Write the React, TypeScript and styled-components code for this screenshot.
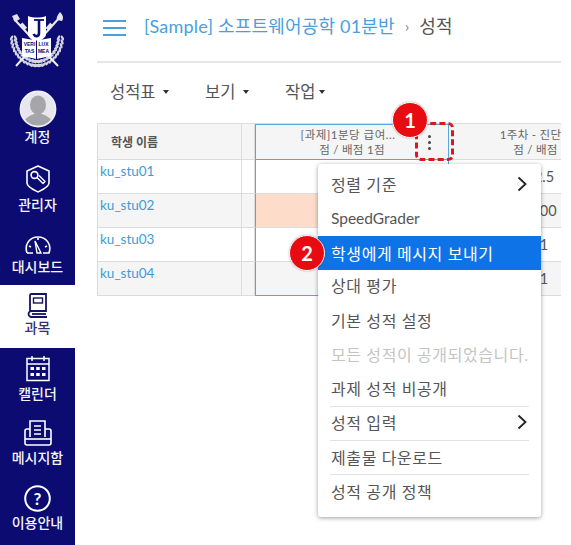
import React from 'react';
import styled, { createGlobalStyle } from 'styled-components';

const Global = createGlobalStyle`
    html, body {
        margin: 0;
        padding: 0;
        background: #fff;
        overflow: hidden;
    }
    * { box-sizing: border-box; }
    body {
        font-family: Lato, "Noto Sans CJK KR", "Noto Sans", sans-serif;
        color: #444;
    }
`;

const Page = styled.div`
    position: relative;
    display: flex;
    width: 571px;
    height: 545px;
    overflow: hidden;
`;

const Sidebar = styled.nav`
    width: 75px;
    flex: none;
    background: #0b0b72;
    display: flex;
    flex-direction: column;
`;

const LogoBox = styled.div`
    height: 87px;
    padding: 12px 0 0 10px;
`;

const NavItem = styled.div<{ $h: number; $pad: number; $active?: boolean }>`
    height: ${(p) => p.$h}px;
    padding-top: ${(p) => p.$pad}px;
    display: flex;
    flex-direction: column;
    align-items: center;
    background: ${(p) => (p.$active ? '#fff' : 'transparent')};
    color: ${(p) => (p.$active ? '#33336e' : '#f4f4fb')};
    font-size: 14px;
    line-height: 18px;
    font-weight: 500;
`;

const IconSlot = styled.div<{ $mb: number }>`
    display: flex;
    margin-bottom: ${(p) => p.$mb}px;
`;

const Main = styled.main`
    flex: 1;
    min-width: 0;
    padding-left: 22px;
`;

const Header = styled.header`
    width: 464px;
    height: 63px;
    border-bottom: 2px solid #e6e6e6;
    display: flex;
    align-items: flex-start;
    padding: 20px 0 0 6px;
`;

const Burger = styled.div`
    position: relative;
    width: 23px;
    height: 16px;
    margin-right: 18px;
    border-top: 2px solid #4a9fdc;
    border-bottom: 2px solid #4a9fdc;
    &::after {
        content: '';
        position: absolute;
        left: 0;
        right: 0;
        top: 5px;
        height: 2px;
        background: #4a9fdc;
    }
`;

const Crumbs = styled.div`
    display: flex;
    align-items: center;
    font-size: 18px;
    line-height: 12px;
    white-space: nowrap;
`;

const CourseLink = styled.span`
    color: #4a9fdc;
    letter-spacing: 0.2px;
`;

const CrumbSep = styled.span`
    color: #8a8a8a;
    margin: 0 10px 0 10px;
    font-size: 16px;
`;

const CrumbNow = styled.span`
    color: #555;
`;

const Toolbar = styled.div`
    display: flex;
    align-items: center;
    height: 60px;
    padding: 0 0 4px 13px;
    font-size: 16.5px;
    color: #555;
`;

const ToolItem = styled.div<{ $w: number; $gap: number }>`
    width: ${(p) => p.$w}px;
    display: flex;
    align-items: center;
    gap: ${(p) => p.$gap}px;
    &::after {
        content: '';
        border-left: 3px solid transparent;
        border-right: 3px solid transparent;
        border-top: 4px solid #333;
        margin-top: 2px;
    }
`;

const Grid = styled.div`
    display: grid;
    grid-template-columns: 145px 13px 194px 194px;
    grid-template-rows: 36px repeat(4, 34px);
    width: 464px;
    border-top: 1px solid #ddd;
    overflow: hidden;
`;

const Cell = styled.div<{ $shade?: boolean; $bg?: string }>`
    background: ${(p) => p.$bg ?? (p.$shade ? '#f5f5f5' : '#fff')};
    border-bottom: 1.5px solid #dcdcdc;
    border-right: 1.5px solid #dcdcdc;
    overflow: hidden;
`;

const NameCell = styled(Cell)`
    border-left: 1.5px solid #dcdcdc;
    padding: 3px 0 0 2px;
    color: #3d9bd9;
    font-size: 13.5px;
    line-height: 16px;
`;

const NameHead = styled(Cell)`
    border-left: 1.5px solid #dcdcdc;
    display: flex;
    align-items: center;
    padding-left: 13px;
    background: #f5f5f5;
    font-size: 12px;
    font-weight: 700;
    color: #555;
`;

const BlueCell = styled(Cell)<{ $top?: boolean; $last?: boolean }>`
    border-left: 1.5px solid #5aa5dc;
    border-right: 1.5px solid #5aa5dc;
    border-top: ${(p) => (p.$top ? '1.5px solid #5aa5dc' : 'none')};
    border-bottom: ${(p) => (p.$top || p.$last ? '1.5px solid #5aa5dc' : '1.5px solid #dcdcdc')};
`;

const ColHead = styled.div`
    height: 100%;
    display: flex;
    flex-direction: column;
    align-items: center;
    justify-content: center;
    font-size: 11.5px;
    line-height: 15px;
    letter-spacing: 0.3px;
    color: #666;
    white-space: nowrap;
`;

// the first column's title sits a little left of its score line
const TrimmedTitle = styled.span`
    margin-right: 8px;
    letter-spacing: 0.5px;
`;

const ColHeadNext = styled(Cell)`
    background: #f5f5f5;
    border-right: none;
`;

const ScoreCell = styled(Cell)`
    border-right: none;
    padding: 9px 4px 0 0;
    text-align: center;
    font-size: 14.5px;
    line-height: 16px;
    color: #555;
`;

const DashBox = styled.div`
    position: absolute;
    left: 415px;
    top: 122px;
    width: 39px;
    height: 39px;
    border: 3px dashed #d81920;
    border-radius: 6px;
`;

const Dots = styled.div`
    position: absolute;
    left: 428px;
    top: 135px;
    display: flex;
    flex-direction: column;
    gap: 3px;
    & i {
        width: 3px;
        height: 3px;
        border-radius: 50%;
        background: #444;
    }
`;

const Badge = styled.div<{ $x: number; $y: number }>`
    position: absolute;
    left: ${(p) => p.$x}px;
    top: ${(p) => p.$y}px;
    width: 36px;
    height: 36px;
    border-radius: 50%;
    background: #e80c12;
    border: 1px solid #fff;
    box-shadow: 0 0 2px rgba(0, 0, 0, 0.3);
    color: #fff;
    font-size: 20px;
    font-weight: 700;
    display: flex;
    align-items: center;
    justify-content: center;
`;

const Menu = styled.div`
    position: absolute;
    left: 318px;
    top: 164px;
    width: 223px;
    height: 353px;
    background: #fff;
    border-radius: 3px;
    box-shadow: 0 1px 4px rgba(0, 0, 0, 0.38);
    padding-top: 3px;
    display: flex;
    flex-direction: column;
`;

const MenuItem = styled.div<{ $active?: boolean; $off?: boolean; $line?: boolean; $latin?: boolean }>`
    position: relative;
    height: 34.25px;
    flex: none;
    display: flex;
    align-items: center;
    justify-content: space-between;
    padding: 0 14px 0 13px;
    font-size: ${(p) => (p.$latin ? 15.5 : 16)}px;
    letter-spacing: ${(p) => (p.$latin ? 0 : 0.6)}px;
    white-space: nowrap;
    background: ${(p) => (p.$active ? '#0f73e8' : 'transparent')};
    color: ${(p) => (p.$active ? '#fff' : p.$off ? '#c4c4c4' : '#555')};
    &:nth-child(n + 4) {
        padding-bottom: 3px;
    }
    ${(p) =>
        p.$line &&
        `&::after {
            content: '';
            position: absolute;
            left: 12px;
            right: 12px;
            bottom: 0;
            height: 1px;
            background: #e2e2e2;
        }`}
`;

const Chevron = () => (
    <svg width="10" height="16" viewBox="0 0 10 16" fill="none" stroke="#222" strokeWidth="1.8">
        <path d="M1.5 1.5 8.5 8 1.5 14.5" />
    </svg>
);

// leaves of the wreath, laid along an arc around the crest, an outer and an inner row
const leaves = [0, 1].flatMap((row) =>
    Array.from({ length: 13 }, (_, i) => {
        const deg = 178 - i * 8;
        const a = (deg * Math.PI) / 180;
        const x = 27 + (row ? 21.5 : 25.5) * Math.cos(a);
        const y = 25 + (row ? 24.5 : 28.5) * Math.sin(a);
        return { x, y, r: deg + 90 + (row ? -28 : 28) };
    })
);

const Logo = () => (
    <svg width="54" height="56" viewBox="0 0 54 56" fill="none">
        {leaves.map((l, i) => (
            <g key={i} fill="#d6d6e2">
                <ellipse cx={l.x} cy={l.y} rx="2.8" ry="1.2" transform={`rotate(${l.r} ${l.x} ${l.y})`} />
                <ellipse cx={54 - l.x} cy={l.y} rx="2.8" ry="1.2" transform={`rotate(${180 - l.r} ${54 - l.x} ${l.y})`} />
            </g>
        ))}
        {/* mace and torch crossing behind the book */}
        <path d="M4 7 48 54" stroke="#ececf3" strokeWidth="2" />
        <path d="M50 5 6 54" stroke="#ececf3" strokeWidth="2" />
        <path d="M2 4 7 2 10 7 5 10Z" fill="#e2e2ea" />
        <path d="M50 0C53 3 54 6 52 9L47 8C46 5 48 3 50 0Z" fill="#e6e6ee" />
        <rect x="36" y="13" width="7" height="3.500" transform="rotate(-48 39 15)" fill="#e6e6ee" />
        <rect x="10" y="12" width="7" height="3.500" transform="rotate(48 13 14)" fill="#e6e6ee" />
        {/* shield with the J */}
        <path d="M18 4C23 6 31 6 36 4V22C36 26 31 28 27 30 23 28 18 26 18 22Z" fill="#fff" />
        <path d="M29 8V21C29 25 25 25 23.500 22" stroke="#0b0b72" strokeWidth="2.600" />
        <path d="M24 8H34" stroke="#0b0b72" strokeWidth="1.800" />
        {/* open book */}
        <path d="M12 26 26.500 28.500 41 26V44L26.500 47 12 44Z" fill="#fff" />
        <path d="M26.500 28.500V47" stroke="#0b0b72" strokeWidth="1" />
        <text x="19.500" y="34" textAnchor="middle" fontSize="5" fontWeight="700" fill="#0b0b72" fontFamily="Liberation Sans">VERI</text>
        <text x="33.500" y="34" textAnchor="middle" fontSize="5" fontWeight="700" fill="#0b0b72" fontFamily="Liberation Sans">LUX</text>
        <text x="19.500" y="41" textAnchor="middle" fontSize="5" fontWeight="700" fill="#0b0b72" fontFamily="Liberation Sans">TAS</text>
        <text x="33.500" y="41" textAnchor="middle" fontSize="5" fontWeight="700" fill="#0b0b72" fontFamily="Liberation Sans">MEA</text>
    </svg>
);

const AccountIcon = () => (
    <svg width="38" height="38" viewBox="0 0 38 38">
        <defs>
            <clipPath id="avatar"><circle cx="19" cy="19" r="17" /></clipPath>
        </defs>
        <circle cx="19" cy="19" r="17.500" fill="#e6e6ec" />
        <g clipPath="url(#avatar)" fill="#a6a6aa">
            <ellipse cx="19" cy="15" rx="8" ry="9.500" />
            <path d="M3 38C3 29 10 26 15 24H23C28 26 35 29 35 38Z" />
        </g>
        <circle cx="19" cy="19" r="17.500" fill="none" stroke="#eeeef8" strokeWidth="1.800" />
    </svg>
);

const AdminIcon = () => (
    <svg width="24" height="28" viewBox="0 0 24 28" fill="none" stroke="#fff" strokeWidth="1.600" strokeLinejoin="round">
        <path d="M12 1 23 6V18C23 22 16 25 12 27 8 25 1 22 1 18V6Z" />
        <circle cx="8.500" cy="10" r="3.400" />
        <path d="M11 12.500 17 18.500 19 16.500 13 10.500" strokeWidth="1.400" />
    </svg>
);

const DashIcon = () => (
    <svg width="28" height="20" viewBox="0 0 28 20" fill="none" stroke="#fff" strokeWidth="1.600">
        <path d="M3 18C0 9 6 2 14 2S28 9 25 18H19M9 18H3" />
        <path d="M11 6 17 18H13Z" strokeWidth="1.400" />
        <path d="M5 11 7 12M23 11 21 12M14 3V5" />
    </svg>
);

const BookIcon = () => (
    <svg width="21" height="25" viewBox="0 0 21 25" fill="none" stroke="#14145f" strokeWidth="1.800">
        <path d="M3 19V2.500C3 1.500 3.500 1 4.500 1H19V18H4.500C3 18 1.500 19.500 1.500 21S3 24 4.500 24H20" />
        <path d="M19 21H5" />
        <rect x="6.500" y="5" width="9" height="5" strokeWidth="1.400" />
    </svg>
);

const CalendarIcon = () => (
    <svg width="24" height="27" viewBox="0 0 24 27" fill="none" stroke="#fff" strokeWidth="1.500">
        <rect x="1" y="3.500" width="22" height="22" />
        <path d="M1 9H23M6 1V6M18 1V6" />
        <g fill="#fff" stroke="none">
            <rect x="4.500" y="12" width="3.500" height="3" />
            <rect x="10.200" y="12" width="3.500" height="3" />
            <rect x="16" y="12" width="3.500" height="3" />
            <rect x="4.500" y="18" width="3.500" height="3" />
            <rect x="10.200" y="18" width="3.500" height="3" />
            <rect x="16" y="18" width="3.500" height="3" />
        </g>
    </svg>
);

const InboxIcon = () => (
    <svg width="28" height="26" viewBox="0 0 28 26" fill="none" stroke="#fff" strokeWidth="1.600">
        <path d="M6 17V1H21V17" />
        <path d="M10 6H17M10 10H17M10 14H17" strokeWidth="1.300" />
        <path d="M6 9H3C2 9 1 10 1 11V23C1 24 2 25 3 25H25C26 25 27 24 27 23V11C27 10 26 9 25 9H21" />
        <path d="M1 19H27" />
    </svg>
);

const HelpIcon = () => (
    <svg width="27" height="27" viewBox="0 0 27 27">
        <circle cx="13.500" cy="13.500" r="12.300" fill="none" stroke="#fff" strokeWidth="2" />
        <text x="13.500" y="19.500" textAnchor="middle" fontSize="17" fontWeight="700" fill="#fff" fontFamily="Lato">?</text>
    </svg>
);

const names = ['ku_stu01', 'ku_stu02', 'ku_stu03', 'ku_stu04'];
const scores = ['2.5', '100', '1', '1'];

const App = () => (
    <Page>
        <Global />
        <Sidebar>
            <LogoBox>
                <Logo />
            </LogoBox>
            <NavItem $h={67} $pad={3}>
                <IconSlot $mb={0}><AccountIcon /></IconSlot>
                계정
            </NavItem>
            <NavItem $h={69} $pad={11}>
                <IconSlot $mb={3}><AdminIcon /></IconSlot>
                관리자
            </NavItem>
            <NavItem $h={62} $pad={12}>
                <IconSlot $mb={3}><DashIcon /></IconSlot>
                대시보드
            </NavItem>
            <NavItem $h={63} $active $pad={8}>
                <IconSlot $mb={1}><BookIcon /></IconSlot>
                과목
            </NavItem>
            <NavItem $h={65} $pad={7}>
                <IconSlot $mb={3}><CalendarIcon /></IconSlot>
                캘린더
            </NavItem>
            <NavItem $h={65} $pad={7}>
                <IconSlot $mb={3}><InboxIcon /></IconSlot>
                메시지함
            </NavItem>
            <NavItem $h={67} $pad={7}>
                <IconSlot $mb={2}><HelpIcon /></IconSlot>
                이용안내
            </NavItem>
        </Sidebar>
        <Main>
            <Header>
                <Burger />
                <Crumbs>
                    <CourseLink>[Sample] 소프트웨어공학 01분반</CourseLink>
                    <CrumbSep>›</CrumbSep>
                    <CrumbNow>성적</CrumbNow>
                </Crumbs>
            </Header>
            <Toolbar>
                <ToolItem $w={95} $gap={7}>성적표</ToolItem>
                <ToolItem $w={80} $gap={8}>보기</ToolItem>
                <ToolItem $w={60} $gap={4}>작업</ToolItem>
            </Toolbar>
            <Grid>
                <NameHead>학생 이름</NameHead>
                <Cell $shade />
                <BlueCell $top $shade>
                    <ColHead>
                        <TrimmedTitle>[과제]1분당 급여...</TrimmedTitle>
                        <span>점 / 배점 1점</span>
                    </ColHead>
                </BlueCell>
                <ColHeadNext>
                    <ColHead>
                        <span>1주차 - 진단평가...</span>
                        <span>점 / 배점 1점</span>
                    </ColHead>
                </ColHeadNext>
                {names.map((name, i) => (
                    <React.Fragment key={name}>
                        <NameCell $shade={i % 2 === 1}>{name}</NameCell>
                        <Cell $shade={i % 2 === 1} />
                        <BlueCell $shade={i % 2 === 1} $bg={i === 1 ? '#fddcca' : undefined} $last={i === 3} />
                        <ScoreCell $shade={i % 2 === 1}>{scores[i]}</ScoreCell>
                    </React.Fragment>
                ))}
            </Grid>
        </Main>
        <Dots><i /><i /><i /></Dots>
        <DashBox />
        <Menu>
            <MenuItem>정렬 기준<Chevron /></MenuItem>
            <MenuItem $latin>SpeedGrader</MenuItem>
            <MenuItem $active>학생에게 메시지 보내기</MenuItem>
            <MenuItem>상대 평가</MenuItem>
            <MenuItem>기본 성적 설정</MenuItem>
            <MenuItem $off>모든 성적이 공개되었습니다.</MenuItem>
            <MenuItem $line>과제 성적 비공개</MenuItem>
            <MenuItem $line>성적 입력<Chevron /></MenuItem>
            <MenuItem $line>제출물 다운로드</MenuItem>
            <MenuItem>성적 공개 정책</MenuItem>
        </Menu>
        <Badge $x={392} $y={102}>1</Badge>
        <Badge $x={289} $y={235}>2</Badge>
    </Page>
);

export default App;
